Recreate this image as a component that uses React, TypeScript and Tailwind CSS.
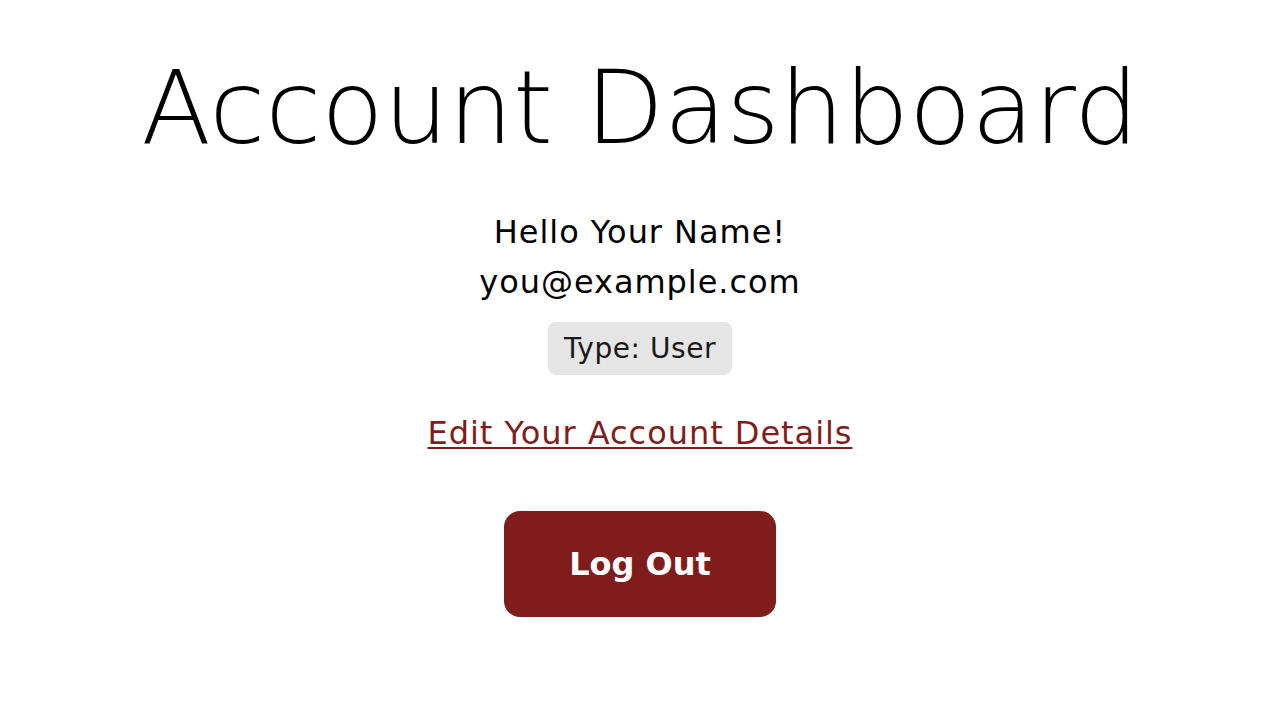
export default function App() {
  return (
    <div className="min-h-screen bg-white flex flex-col items-center font-['DejaVu_Sans',sans-serif] text-black">
      <h1 className="mt-[47px] text-[102px] font-extralight leading-[1.2]">
        Account Dashboard
      </h1>
      <div className="mt-[38px] flex flex-col items-center">
        <p className="text-[32px] leading-[50px] tracking-[0.03em]">Hello Your Name!</p>
        <p className="text-[32px] leading-[50px] tracking-[0.03em]">you@example.com</p>
        <span className="mt-[15px] rounded-lg bg-[#e5e5e5] px-4 py-2 text-[28px] leading-[37px] tracking-[0.02em] text-[#1a1a1a]">
          Type: User
        </span>
      </div>
      <a
        href="#"
        className="mt-[34px] text-[32px] leading-[48px] tracking-[0.03em] text-[#7f1d1d] underline underline-offset-[3px] decoration-[1.5px]"
      >
        Edit Your Account Details
      </a>
      <button
        type="button"
        className="mt-[54px] w-[272px] h-[106px] rounded-2xl bg-[#7f1d1d] text-white text-[32px] font-bold"
      >
        Log Out
      </button>
    </div>
  );
}
